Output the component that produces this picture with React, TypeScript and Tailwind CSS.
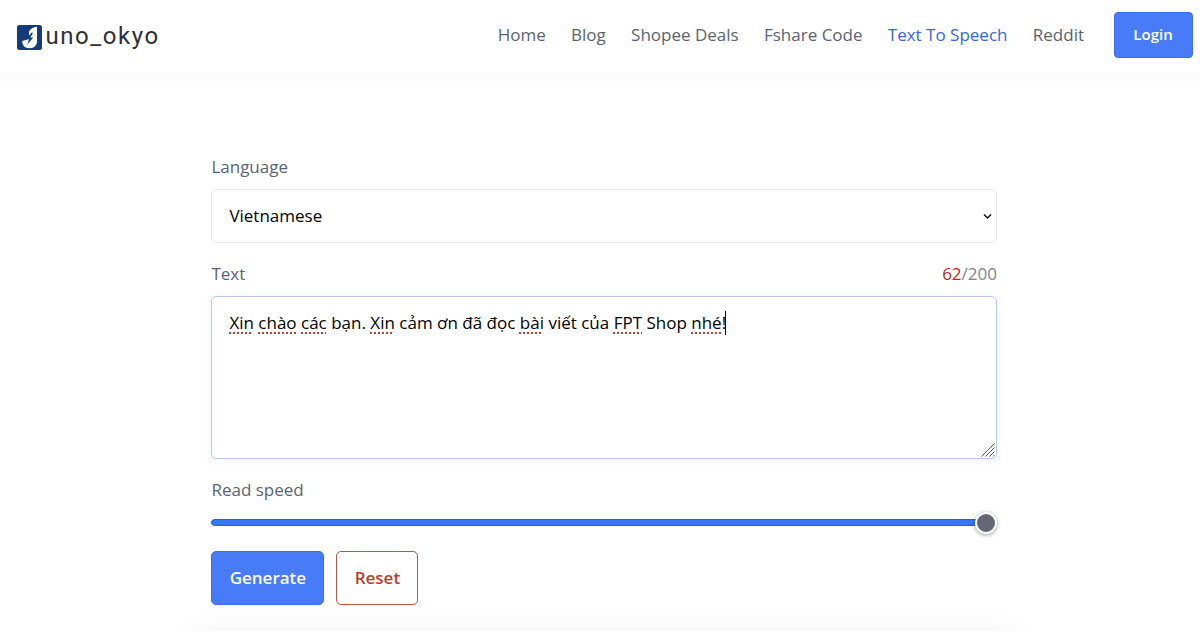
import React from "react";

const links = ["Home", "Blog", "Shopee Deals", "Fshare Code", "Text To Speech", "Reddit"];

const words = [
  { text: "Xin", misspelled: true },
  { text: "chào", misspelled: true },
  { text: "các", misspelled: true },
  { text: "bạn." },
  { text: "Xin", misspelled: true },
  { text: "cảm" },
  { text: "ơn" },
  { text: "đã" },
  { text: "đọc" },
  { text: "bài", misspelled: true },
  { text: "viết" },
  { text: "của" },
  { text: "FPT", misspelled: true },
  { text: "Shop" },
  { text: "nhé", misspelled: true, after: "!" },
];

function Logo() {
  return (
    <a href="#" className="flex items-center">
      <svg width="25" height="25" viewBox="0 0 25 25" className="mt-[2px]">
        <rect width="25" height="25" rx="2.5" fill="#143c78" />
        <path d="M12 6.5C13.8 3.7 16.2 2.3 20 1.8V16c0 4.6-3 7.2-7.5 7.2-4.3 0-7.1-2.4-7.3-7.2l4.6-1.2 2.2-3z" fill="#fff" />
        <path d="m14.2 7.8-5 6.6 2.9-.2-2 5.5 6.2-7.3-3 .1 2.8-4.7z" fill="#143c78" />
      </svg>
      <span className="ml-[3px] font-['Roboto',sans-serif] text-[24px] leading-8 tracking-[1.6px] text-[#303030]">uno_okyo</span>
    </a>
  );
}

export default function App() {
  return (
    <div className="h-[631px] overflow-hidden bg-white font-['Open_Sans',sans-serif] text-[17px] leading-6 text-[#5a6276]">
      <header className="flex h-[73px] items-start justify-between bg-white pl-[17.4px] pr-[7.5px] shadow-[0_2px_12px_rgba(30,40,90,0.04)]">
        <div className="pt-5">
          <Logo />
        </div>
        <div className="flex items-center pt-3">
          <nav className="flex gap-[25.3px]">
            {links.map((link) => (
              <a key={link} href="#" className={link === "Text To Speech" ? "text-[#3667dc]" : "text-[#59636f]"}>
                {link}
              </a>
            ))}
          </nav>
          <button className="ml-[29.5px] h-[46px] w-[79px] rounded-[4px] border border-[#3b6bea] bg-[#487bf7] pb-0.5 text-[15px] font-semibold text-white">Login</button>
        </div>
      </header>

      <main className="ml-[211.4px] w-[785.6px] pt-[82px]">
        <label className="block">Language</label>
        <div className="mt-[10px] flex h-[54px] items-center justify-between rounded-[5px] border border-[#e5e7ec] pl-[17px] pr-1 text-black">
          Vietnamese
          <svg width="9" height="7" viewBox="0 0 9 7" fill="none" stroke="#111" strokeWidth="1.5">
            <path d="m1 1.5 3.5 3.5L8 1.5" />
          </svg>
        </div>

        <div className="mt-[19px] flex justify-between">
          <label>Text</label>
          <span className="text-[#7d8592]">
            <span className="text-[#b92b20]">62</span>/200
          </span>
        </div>
        <div className="relative mt-[10px] h-[163px] rounded-[5px] border border-[#b8c9ea] px-[17px] pt-[14px] text-black shadow-[0_2px_10px_rgba(72,123,247,0.08)]">
          <p className="flex items-center whitespace-pre">
            {words.map((word, i) => (
              <span key={i}>
                <span className={word.misspelled ? "underline decoration-[#bd3c36] decoration-dotted decoration-2 underline-offset-[3px] [text-decoration-skip-ink:none]" : ""}>{word.text}</span>
                {word.after ?? " "}
              </span>
            ))}
            <span className="-ml-px h-6 w-px bg-black" />
          </p>
          <svg width="14" height="14" viewBox="0 0 14 14" className="absolute bottom-px right-px" stroke="#555" strokeWidth="1">
            <path d="M.5 13.5 13.5.5M4.5 13.5l9-9M8.5 13.5l5-5M12 13.5l1.5-1.5" />
          </svg>
        </div>

        <label className="mt-[19px] block">Read speed</label>
        <div className="mt-[10px] flex h-[22px] items-center">
          <div className="-mt-px h-[7px] flex-1 rounded-l-full border border-[#245fe0] bg-[#3478f6]" />
          <div className="-ml-1 size-[22px] rounded-full border-[2.5px] border-white bg-[#646575] shadow-[0_1px_4px_rgba(0,0,0,0.4)]" />
        </div>

        <div className="mt-[17px] flex gap-3 font-semibold">
          <button className="h-[54px] w-[113px] rounded-[5px] border border-[#3b6bea] bg-[#487bf7] text-white">Generate</button>
          <button className="h-[54px] w-[82px] rounded-[5px] border border-[#c25045] text-[#b93b2e]">Reset</button>
        </div>
        <div className="-mx-[20px] mt-[35px] h-20 rounded-[20px] shadow-[0_0_36px_rgba(0,0,0,0.1)]" />
      </main>
    </div>
  );
}
